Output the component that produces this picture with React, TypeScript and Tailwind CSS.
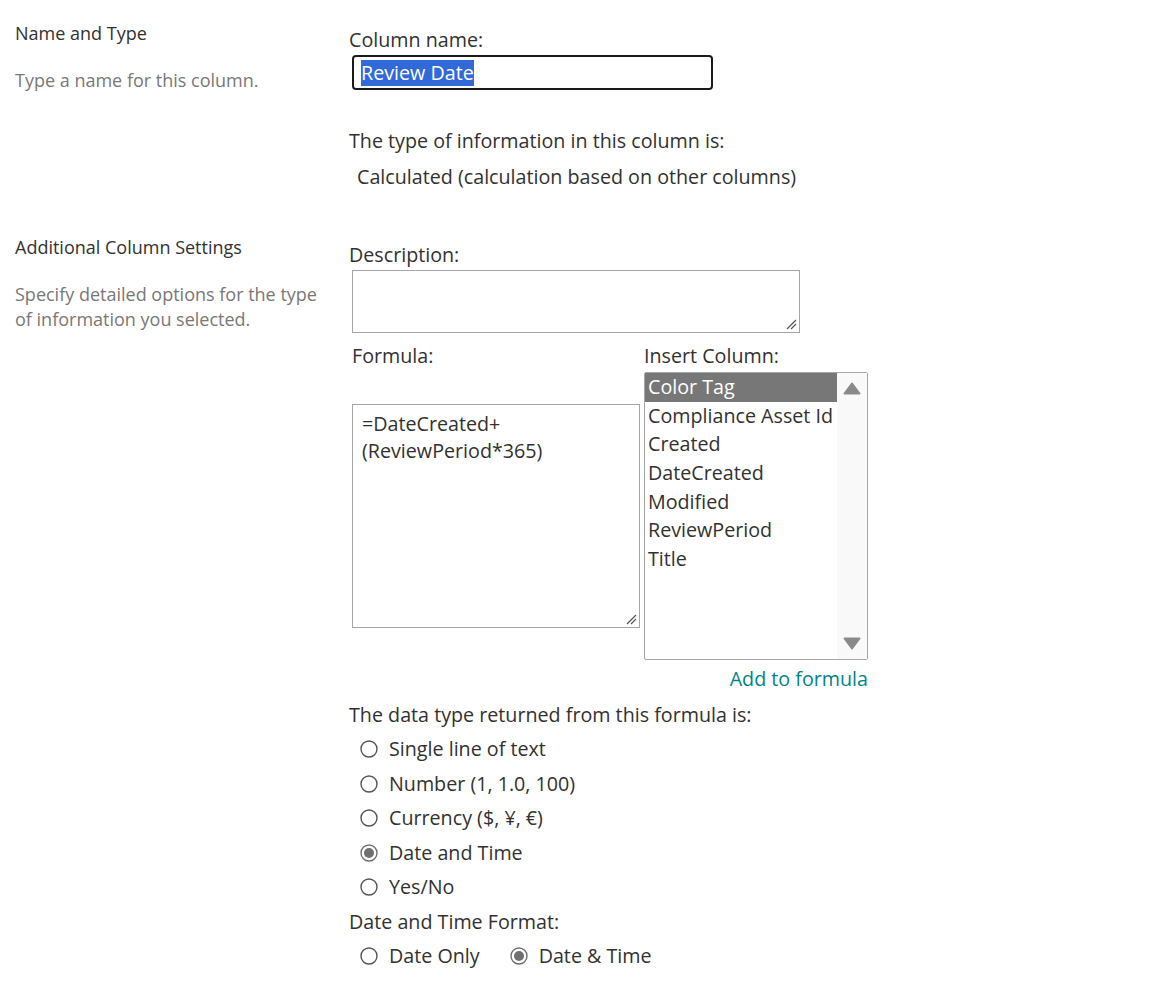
import React from 'react';

const columns = ['Color Tag', 'Compliance Asset Id', 'Created', 'DateCreated', 'Modified', 'ReviewPeriod', 'Title'];

const returnTypes = [
  { label: 'Single line of text', checked: false },
  { label: 'Number (1, 1.0, 100)', checked: false },
  { label: 'Currency ($, ¥, €)', checked: false },
  { label: 'Date and Time', checked: true },
  { label: 'Yes/No', checked: false },
];

function Radio({ checked }: { checked?: boolean }) {
  return (
    <svg className="shrink-0" width="18" height="18" viewBox="0 0 18 18">
      <circle cx="9" cy="9" r="8" fill="white" stroke={checked ? '#707070' : '#555'} strokeWidth="1.4" />
      {checked && <circle cx="9" cy="9" r="5" fill="#707070" />}
    </svg>
  );
}

function ResizeGrip() {
  return (
    <svg className="absolute bottom-[2px] right-[2px]" width="12" height="12" viewBox="0 0 12 12">
      <path d="M2 11 L11 2 M6 11 L11 6" stroke="#555" strokeWidth="1.2" />
    </svg>
  );
}

function SideInfo({ title, children }: { title: string; children: React.ReactNode }) {
  return (
    <div className="w-[349px] shrink-0 pl-[15px] pr-4 text-[18px]">
      <div className="leading-[24px] text-[#323130]">{title}</div>
      <div className="mt-[23px] w-[315px] leading-[25px] text-[#7a7876]">{children}</div>
    </div>
  );
}

export default function App() {
  return (
    <div className="min-h-[983px] bg-white text-[#323130]" style={{ fontFamily: '"Open Sans", sans-serif' }}>
      {/* Name and Type */}
      <section className="flex">
        <div className="pt-[21px]">
          <SideInfo title="Name and Type">Type a name for this column.</SideInfo>
        </div>
        <div className="pt-[26px] text-[19.7px] leading-[28px]">
          <div>Column name:</div>
          <div className="ml-[3px] mt-[1px] flex h-[35px] w-[361px] items-center rounded-[4px] border-2 border-[#1b1b1b] pl-[7px]">
            <span className="bg-[#3169d8] leading-[26px] text-white">Review Date</span>
          </div>
          <div className="mt-[37px]">The type of information in this column is:</div>
          <div className="ml-[8px] mt-[8px]">Calculated (calculation based on other columns)</div>
        </div>
      </section>

      {/* Additional Column Settings */}
      <section className="mt-[29px] flex">
        <div className="pt-[15px]">
          <SideInfo title="Additional Column Settings">Specify detailed options for the type of information you selected.</SideInfo>
        </div>
        <div className="pt-[21px] text-[19.7px] leading-[28px]">
          <div>Description:</div>
          <div className="relative ml-[3px] mt-[1px] h-[63px] w-[448px] border border-[#a6a6a6]">
            <ResizeGrip />
          </div>

          <div className="ml-[3px] mt-[9px] flex gap-[4px]">
            <div className="w-[288px]">
              <div>Formula:</div>
              <div className="relative mt-[34px] h-[224px] w-[288px] border border-[#a6a6a6] pl-[9px] pt-[5px] leading-[27px]">
                <div>=DateCreated+</div>
                <div>(ReviewPeriod*365)</div>
                <ResizeGrip />
              </div>
            </div>
            <div className="w-[224px]">
              <div>Insert Column:</div>
              <div className="mt-[2px] flex h-[288px] w-[224px] rounded-[2px] border border-[#a6a6a6]">
                <ul className="flex-1">
                  {columns.map((c, i) => (
                    <li
                      key={c}
                      className={`h-[28.7px] whitespace-nowrap pl-[3px] leading-[28px] ${
                        i === 0 ? 'bg-[#777777] text-white' : 'text-[#323130]'
                      }`}
                    >
                      {c}
                    </li>
                  ))}
                </ul>
                <div className="flex w-[30px] flex-col items-center justify-between bg-[#f9f9f9] py-[9px]">
                  <svg width="18" height="13" viewBox="0 0 18 13">
                    <path d="M9 1.5 L16.5 11.5 L1.5 11.5 Z" fill="#8a8a8a" stroke="#8a8a8a" strokeWidth="2" strokeLinejoin="round" />
                  </svg>
                  <svg width="18" height="13" viewBox="0 0 18 13">
                    <path d="M1.5 1.5 L16.5 1.5 L9 11.5 Z" fill="#8a8a8a" stroke="#8a8a8a" strokeWidth="2" strokeLinejoin="round" />
                  </svg>
                </div>
              </div>
              <div className="mt-[5px] text-right text-[#038387]">Add to formula</div>
            </div>
          </div>

          <div className="mt-[8px]">The data type returned from this formula is:</div>
          <div className="mt-[3px]">
            {returnTypes.map((t) => (
              <div key={t.label} className="flex h-[34.5px] items-center gap-[11px] pl-[11px]">
                <Radio checked={t.checked} />
                <span>{t.label}</span>
              </div>
            ))}
          </div>

          <div className="mt-[3px]">Date and Time Format:</div>
          <div className="mt-[3px] flex h-[34px] items-center pl-[11px]">
            <div className="flex items-center gap-[11px]">
              <Radio />
              <span>Date Only</span>
            </div>
            <div className="ml-[30px] flex items-center gap-[11px]">
              <Radio checked />
              <span>Date &amp; Time</span>
            </div>
          </div>
        </div>
      </section>
    </div>
  );
}
